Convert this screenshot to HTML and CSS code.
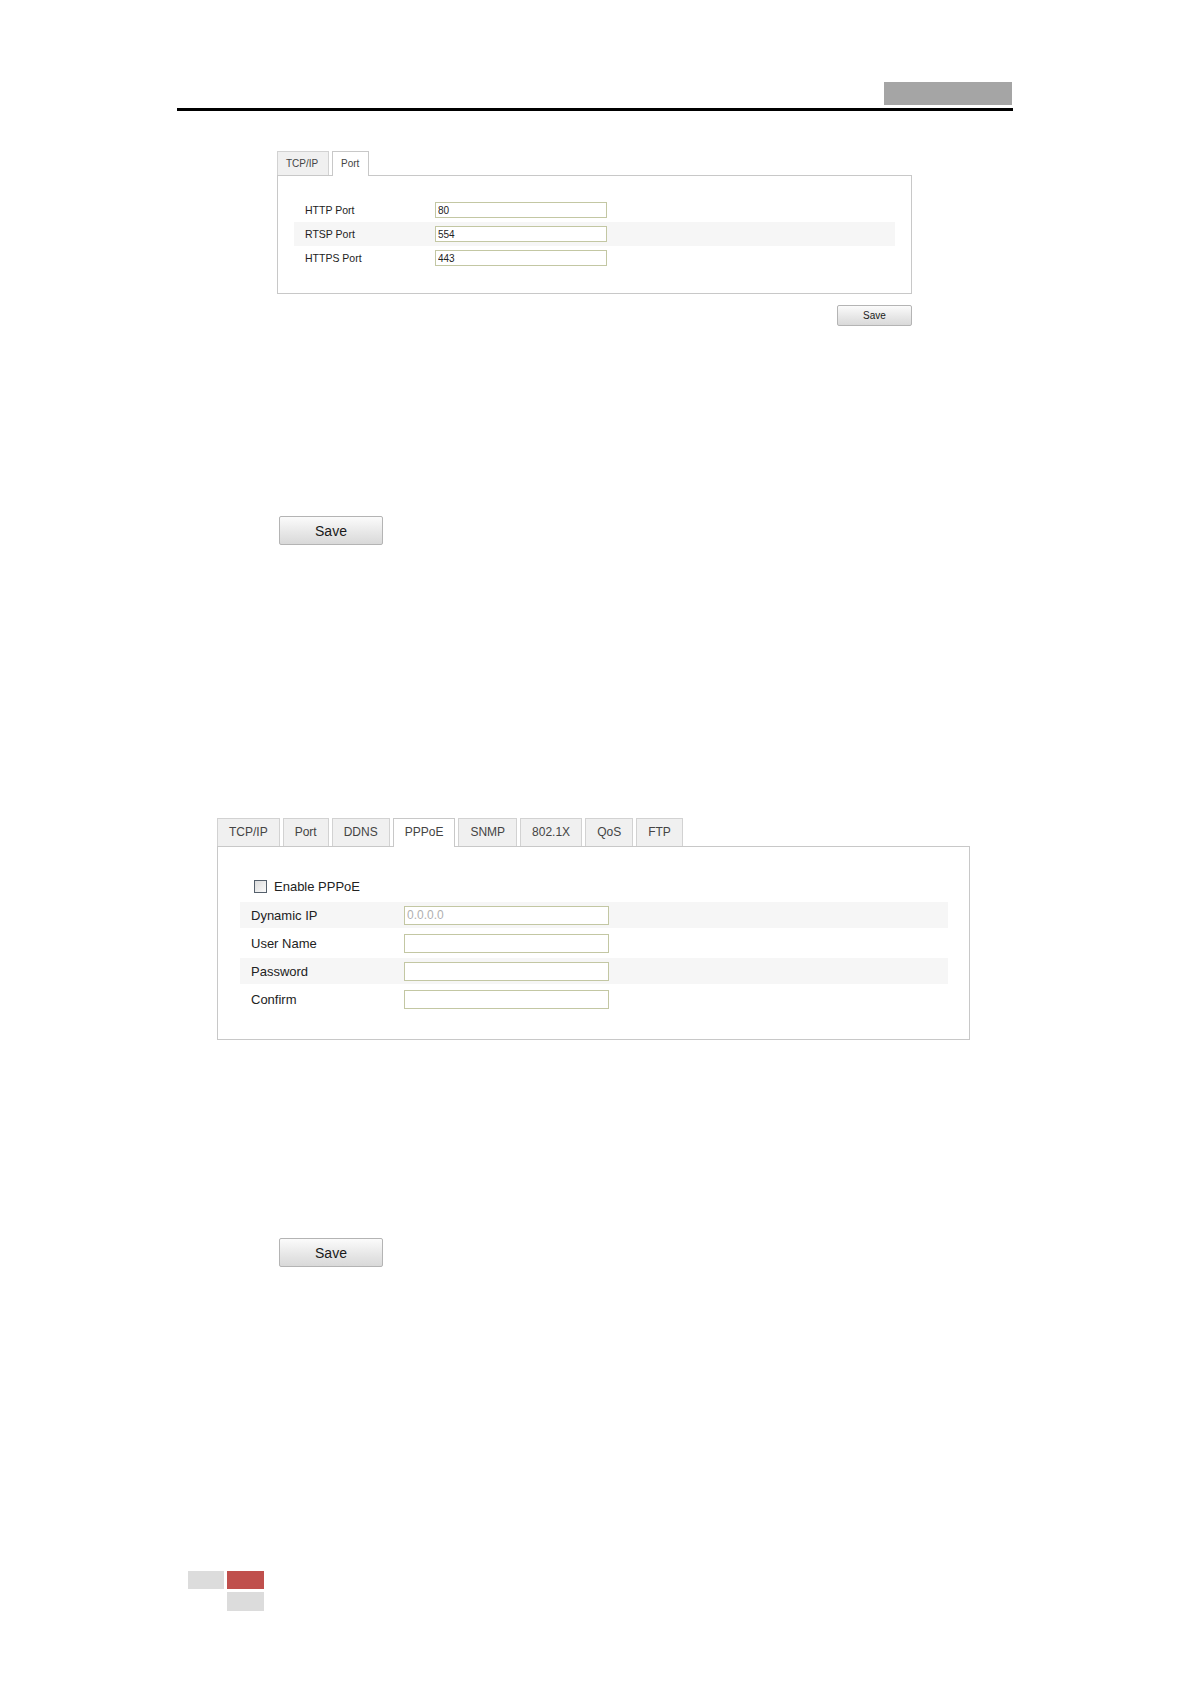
FILE: index.html
```html
<!DOCTYPE html>
<html lang="en">
<head>
    <meta charset="UTF-8">
    <title>Network Settings</title>
    <link rel="stylesheet" href="styles.css">
</head>
<body>
    <div class="page">
        <div class="header">
            <div class="header-tab"></div>
        </div>

        <!-- Port settings -->
        <div class="shot shot-port">
            <div class="tabs tabs-small">
                <div class="tab">TCP/IP</div>
                <div class="tab active">Port</div>
            </div>
            <div class="panel panel-small">
                <div class="row">
                    <label>HTTP Port</label>
                    <input type="text" value="80">
                </div>
                <div class="row shaded">
                    <label>RTSP Port</label>
                    <input type="text" value="554">
                </div>
                <div class="row">
                    <label>HTTPS Port</label>
                    <input type="text" value="443">
                </div>
            </div>
            <div class="actions">
                <button class="btn btn-small">Save</button>
            </div>
        </div>

        <button class="btn btn-big save-first">Save</button>

        <!-- PPPoE settings -->
        <div class="shot shot-pppoe">
            <div class="tabs">
                <div class="tab">TCP/IP</div>
                <div class="tab">Port</div>
                <div class="tab">DDNS</div>
                <div class="tab active">PPPoE</div>
                <div class="tab">SNMP</div>
                <div class="tab">802.1X</div>
                <div class="tab">QoS</div>
                <div class="tab">FTP</div>
            </div>
            <div class="panel panel-large">
                <div class="check-row">
                    <input type="checkbox" id="enablePppoe">
                    <label for="enablePppoe">Enable PPPoE</label>
                </div>
                <div class="row shaded">
                    <label>Dynamic IP</label>
                    <input type="text" value="0.0.0.0" class="disabled" disabled>
                </div>
                <div class="row">
                    <label>User Name</label>
                    <input type="text">
                </div>
                <div class="row shaded">
                    <label>Password</label>
                    <input type="password">
                </div>
                <div class="row">
                    <label>Confirm</label>
                    <input type="password">
                </div>
            </div>
        </div>

        <button class="btn btn-big save-second">Save</button>

        <div class="footer-marks">
            <div class="mark"></div>
            <div class="mark red"></div>
            <div class="mark empty"></div>
            <div class="mark"></div>
        </div>
    </div>
</body>
</html>
```

FILE: styles.css
```css
body {
    margin: 0;
    padding: 0;
    font-family: 'Liberation Sans', Arial, sans-serif;
    background: #fff;
    color: #222;
}
.page {
    width: 1191px;
    padding-top: 82px;
}
.header {
    margin-left: 177px;
    width: 836px;
    display: flex;
    justify-content: flex-end;
    padding-bottom: 3px;
    border-bottom: 3px solid #000;
}
.header-tab {
    width: 128px;
    height: 23px;
    margin-right: 1px;
    background-color: #a5a5a5;
}

/* tabs */
.tabs {
    display: flex;
    align-items: flex-end;
    gap: 3px;
}
.tab {
    position: relative;
    box-sizing: border-box;
    height: 28px;
    line-height: 27px;
    padding: 0 11px;
    font-size: 12px;
    color: #444;
    background-color: #f0f0f0;
    border: 1px solid #d2d2d2;
    border-bottom: none;
}
.tab.active {
    height: 29px;
    margin-bottom: -1px;
    z-index: 1;
    background-color: #fff;
    border-color: #c8c8c8;
}
.tabs-small .tab {
    height: 24px;
    line-height: 24px;
    padding: 0 8px;
    font-size: 10px;
}
.tabs-small .tab:first-child {
    width: 52px;
}
.tabs-small .tab.active {
    height: 25px;
    width: 37px;
}

/* panels */
.panel {
    box-sizing: border-box;
    border: 1px solid #c8c8c8;
}
.row {
    display: flex;
    align-items: center;
}
.row.shaded {
    background-color: #f6f6f6;
}
.row label {
    flex: none;
}
input[type="text"], input[type="password"] {
    box-sizing: border-box;
    margin: 0;
    padding: 0 2px;
    border: 1px solid #c3c7a3;
    background: #fff;
    font-family: 'Liberation Sans', Arial, sans-serif;
    color: #222;
    outline: none;
}
input.disabled {
    color: #b0b0b0;
    background: #fff;
}

/* port panel */
.shot-port {
    margin: 40px 0 0 277px;
    width: 635px;
}
.panel-small {
    padding: 22px 16px 23px;
}
.panel-small .row {
    height: 24px;
    padding-left: 11px;
    font-size: 10.5px;
}
.panel-small .row label {
    width: 130px;
}
.panel-small input {
    width: 172px;
    height: 16px;
    font-size: 10px;
}
.actions {
    display: flex;
    justify-content: flex-end;
    margin-top: 11px;
}

/* buttons */
.btn {
    display: block;
    box-sizing: border-box;
    border: 1px solid #b4b4b4;
    border-radius: 2px;
    background: linear-gradient(#fbfbfb, #e6e6e6 60%, #d9d9d9);
    color: #1a1a1a;
    font-family: 'Liberation Sans', Arial, sans-serif;
    cursor: pointer;
    padding: 0;
}
.btn-small {
    width: 75px;
    height: 21px;
    font-size: 10px;
}
.btn-big {
    width: 104px;
    height: 29px;
    font-size: 14px;
    margin-left: 279px;
}
.save-first {
    margin-top: 190px;
}
.save-second {
    margin-top: 198px;
}

/* pppoe panel */
.shot-pppoe {
    margin: 273px 0 0 217px;
    width: 753px;
}
.panel-large {
    padding: 28px 21px 27px 22px;
}
.check-row {
    display: flex;
    align-items: center;
    height: 22px;
    margin-bottom: 5px;
    padding-left: 14px;
    font-size: 13px;
}
.check-row input {
    appearance: none;
    -webkit-appearance: none;
    width: 13px;
    height: 13px;
    margin: 0 7px 0 0;
    border: 1px solid #55606c;
    background: linear-gradient(135deg, #dcdcdc, #fafafa);
}
.panel-large .row {
    height: 26px;
    margin-top: 2px;
    padding-left: 11px;
    font-size: 13px;
}
.panel-large .row:nth-child(2) {
    margin-top: 0;
}
.panel-large .row label {
    width: 153px;
}
.panel-large input[type="text"], .panel-large input[type="password"] {
    width: 205px;
    height: 19px;
    font-size: 12px;
}

/* page marks */
.footer-marks {
    margin: 304px 0 0 188px;
    display: grid;
    grid-template-columns: 36px 37px;
    grid-template-rows: 18px 19px;
    gap: 3px;
}
.mark {
    background-color: #dcdcdc;
}
.mark.red {
    background-color: #c0504d;
}
.mark.empty {
    background: none;
}
```
